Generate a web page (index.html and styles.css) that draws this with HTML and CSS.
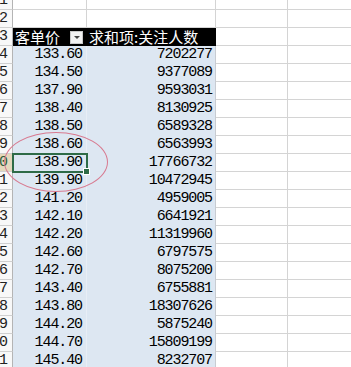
FILE: index.html
```html
<!DOCTYPE html>
<html>
<head>
<meta charset="utf-8">
<link rel="stylesheet" href="styles.css">
</head>
<body>
<div class="sheet">
  <div class="rh">1</div><div class="c"></div><div class="c"></div><div class="c"></div><div class="c"></div>
  <div class="rh">2</div><div class="c"></div><div class="c"></div><div class="c"></div><div class="c"></div>
  <div class="rh">3</div>
  <div class="hd hd-b"><span>客单价</span><span class="dd"><span class="tri"></span></span></div>
  <div class="hd">求和项:关注人数</div>
  <div class="c"></div><div class="c"></div>

  <div class="rh">4</div><div class="d b">133.60</div><div class="d e">7202277</div><div class="c"></div><div class="c"></div>
  <div class="rh">5</div><div class="d b">134.50</div><div class="d e">9377089</div><div class="c"></div><div class="c"></div>
  <div class="rh">6</div><div class="d b">137.90</div><div class="d e">9593031</div><div class="c"></div><div class="c"></div>
  <div class="rh">7</div><div class="d b">138.40</div><div class="d e">8130925</div><div class="c"></div><div class="c"></div>
  <div class="rh">8</div><div class="d b">138.50</div><div class="d e">6589328</div><div class="c"></div><div class="c"></div>
  <div class="rh">9</div><div class="d b">138.60</div><div class="d e">6563993</div><div class="c"></div><div class="c"></div>
  <div class="rh rh-sel">10</div><div class="d b sel">138.90<span class="handle"></span></div><div class="d e">17766732</div><div class="c"></div><div class="c"></div>
  <div class="rh">11</div><div class="d b">139.90</div><div class="d e">10472945</div><div class="c"></div><div class="c"></div>
  <div class="rh">12</div><div class="d b">141.20</div><div class="d e">4959005</div><div class="c"></div><div class="c"></div>
  <div class="rh">13</div><div class="d b">142.10</div><div class="d e">6641921</div><div class="c"></div><div class="c"></div>
  <div class="rh">14</div><div class="d b">142.20</div><div class="d e">11319960</div><div class="c"></div><div class="c"></div>
  <div class="rh">15</div><div class="d b">142.60</div><div class="d e">6797575</div><div class="c"></div><div class="c"></div>
  <div class="rh">16</div><div class="d b">142.70</div><div class="d e">8075200</div><div class="c"></div><div class="c"></div>
  <div class="rh">17</div><div class="d b">143.40</div><div class="d e">6755881</div><div class="c"></div><div class="c"></div>
  <div class="rh">18</div><div class="d b">143.80</div><div class="d e">18307626</div><div class="c"></div><div class="c"></div>
  <div class="rh">19</div><div class="d b">144.20</div><div class="d e">5875240</div><div class="c"></div><div class="c"></div>
  <div class="rh">20</div><div class="d b">144.70</div><div class="d e">15809199</div><div class="c"></div><div class="c"></div>
  <div class="rh">21</div><div class="d b">145.40</div><div class="d e">8232707</div><div class="c"></div><div class="c"></div>
</div>
<div class="circle"></div>
</body>
</html>
```
FILE: styles.css
```css
html, body {
  margin: 0;
  padding: 0;
  background: #ffffff;
  overflow: hidden;
  width: 351px;
  height: 367px;
}

.sheet {
  display: grid;
  grid-template-columns: 13px 74px 129px 72px 80px;
  grid-auto-rows: 18px;
  margin-top: -8px;
  font-family: "Liberation Mono", "DejaVu Sans Mono", monospace;
  font-size: 15px;
  letter-spacing: -1.1px;
  color: #000;
}

.sheet > div {
  box-sizing: border-box;
  line-height: 17px;
}

.rh {
  display: flex;
  justify-content: flex-end;
  overflow: hidden;
  background: #f8f8f8;
  border-right: 1px solid #b4b4b4;
  border-bottom: 1px solid #d0d0d0;
  padding-right: 5px;
  color: #222;
  white-space: nowrap;
}

.rh-sel {
  background: #e4d8bc;
  color: #2f5d3c;
}

.c {
  border-right: 1px solid #d4d4d4;
  border-bottom: 1px solid #d4d4d4;
}

.hd {
  background: #000;
  color: #fff;
  font-family: "Noto Sans CJK SC", "Noto Sans", sans-serif;
  font-size: 15px;
  letter-spacing: 0;
  line-height: 18px !important;
  padding-left: 2px;
  white-space: nowrap;
}

.hd-b {
  display: flex;
  justify-content: space-between;
  align-items: center;
  padding-right: 4px;
}

.dd {
  width: 13px;
  height: 13px;
  box-sizing: border-box;
  background: #f2f2f2;
  border: 1px solid #c8c8c8;
  display: flex;
  align-items: center;
  justify-content: center;
}

.tri {
  width: 0;
  height: 0;
  border-left: 3px solid transparent;
  border-right: 3px solid transparent;
  border-top: 3px solid #444;
  margin-top: 1px;
}

.d {
  background: #dde7f2;
  text-align: right;
  white-space: nowrap;
}

.b {
  padding-right: 4px;
  border-right: 1px solid #e8eef6;
}

.e {
  padding-right: 3px;
  border-right: 1px solid #c8ccd2;
}

.sel {
  position: relative;
}

.sel::after {
  content: "";
  position: absolute;
  left: -1px;
  top: -1px;
  right: -2px;
  bottom: -1px;
  border: 2px solid #2e6b47;
}

.handle {
  position: absolute;
  right: -4px;
  bottom: -3px;
  width: 5px;
  height: 5px;
  background: #2e6b47;
  border: 1px solid #fff;
  z-index: 2;
}

.circle {
  position: absolute;
  left: 4px;
  top: 132px;
  width: 104px;
  height: 60px;
  box-sizing: border-box;
  border: 1.5px solid #d87a90;
  border-radius: 50%;
}
```
